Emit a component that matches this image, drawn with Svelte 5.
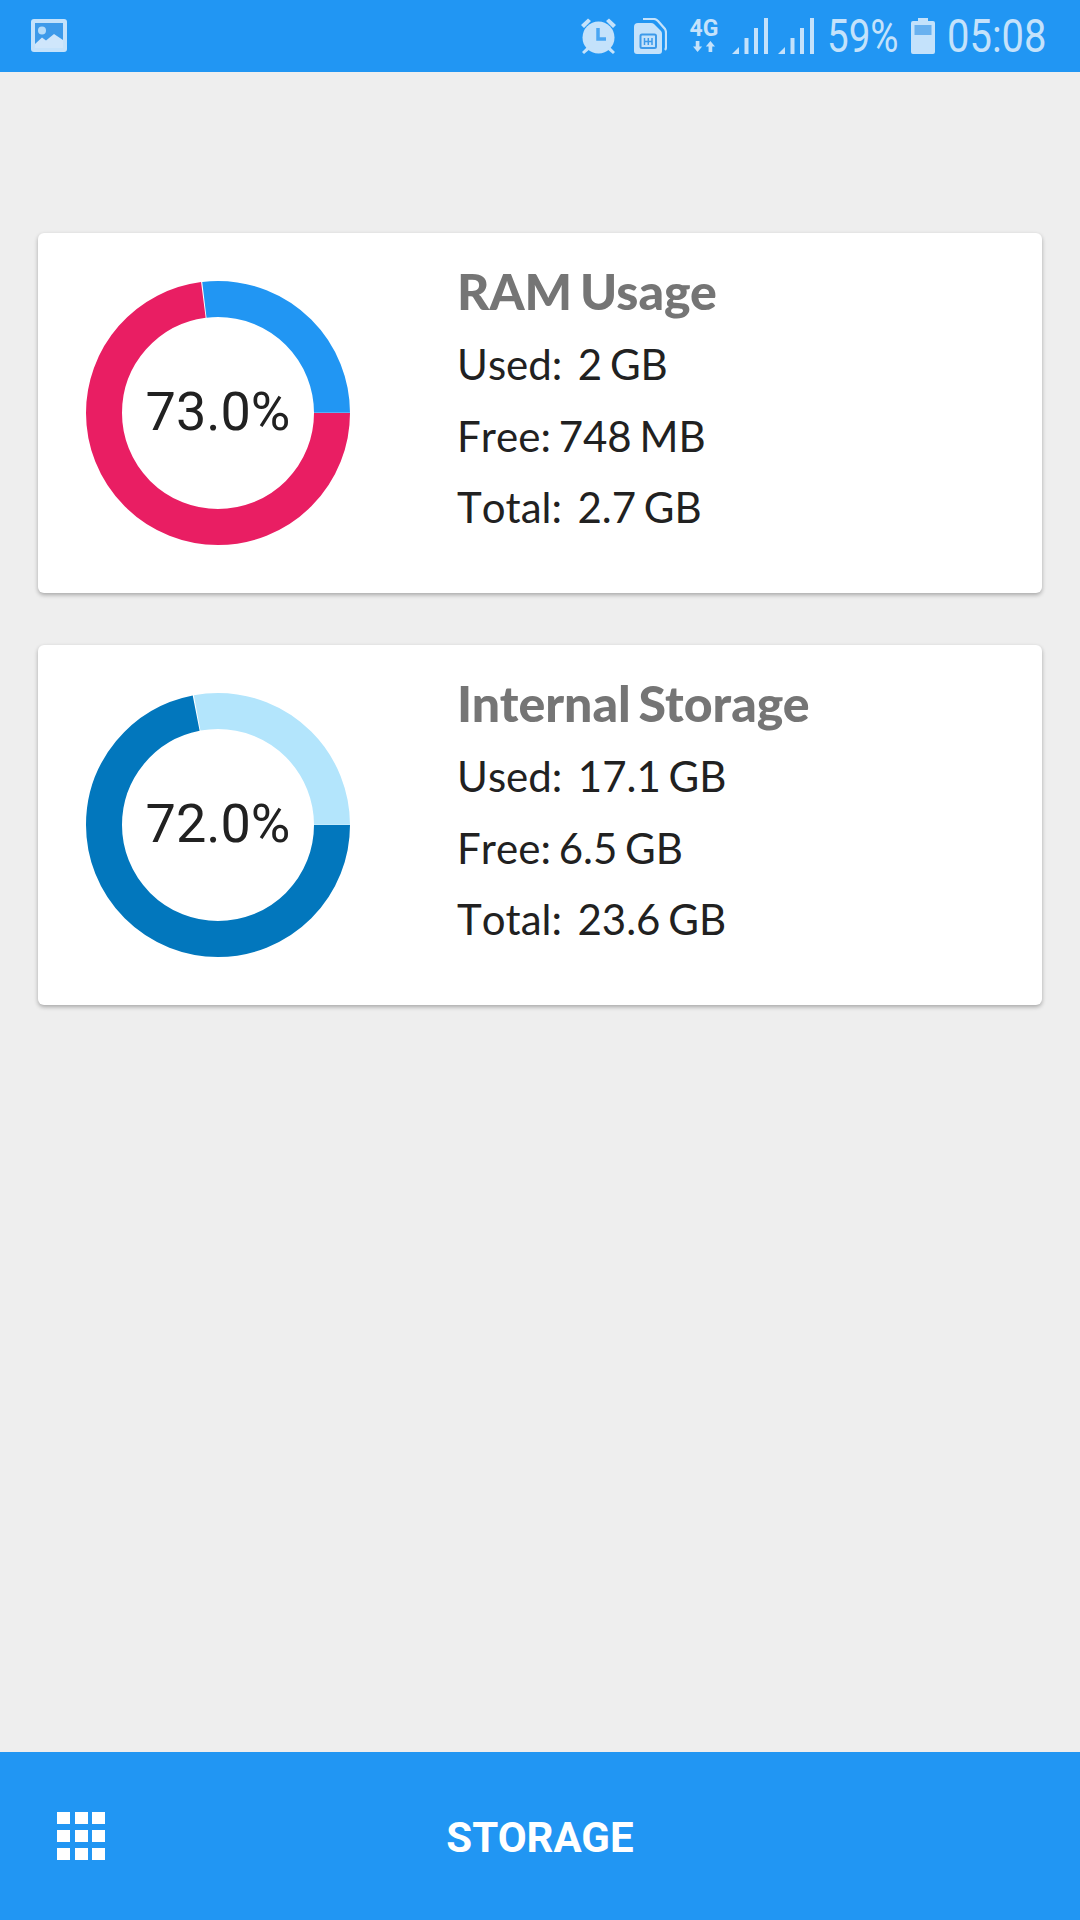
<script>
  const R = 114
  const C = 2 * Math.PI * R

  const cards = [
    {
      title: 'RAM Usage',
      pct: 73,
      used: '#e91e63',
      free: '#2196f3',
      rows: ['Used:  2 GB', 'Free: 748 MB', 'Total:  2.7 GB']
    },
    {
      title: 'Internal Storage',
      pct: 72,
      used: '#0277bd',
      free: '#b3e5fc',
      rows: ['Used:  17.1 GB', 'Free: 6.5 GB', 'Total:  23.6 GB']
    }
  ]

  // arcs start at 3 o'clock and run clockwise, 1px gap between the two
  const dash = (from, to) => {
    const a = (from / 100) * C
    const b = (to / 100) * C
    return { array: `${b - a - 1} ${C - (b - a - 1)}`, offset: -a }
  }
</script>

<div class="screen">
  <header class="status">
    <svg class="pic" viewBox="0 0 36 33" width="36" height="33">
      <rect width="36" height="33" rx="3" fill="#c4e2fb" />
      <rect x="4" y="4" width="28" height="25" fill="#3d9aea" />
      <circle cx="11" cy="11.5" r="4" fill="#b5dcfa" />
      <path d="M4 25 L11 18.5 L15 21.5 L23 15 L32 21 V29 H4 Z" fill="#cfe6fb" />
    </svg>

    <div class="tray">
      <svg class="i-alarm" viewBox="0 0 35 36" width="35" height="36">
        <circle cx="17.5" cy="19.5" r="16" fill="#c4e2fb" />
        <path d="M0 7 L7 0.5 L10 3 L3 10 Z M35 7 L28 0.500 L25 3 L32 10 Z" fill="#c4e2fb" />
        <path d="M3 36 L1 34 L6 29 L9 31 Z M32 36 L34 34 L29 29 L26 31 Z" fill="#c4e2fb" />
        <path d="M17 10 V21 H25" fill="none" stroke="#4aa6f3" stroke-width="3.500" />
      </svg>
      <svg class="i-sim" viewBox="0 0 33 36" width="33" height="36">
        <path d="M9 1 H20 Q22 1 24 3 L31 11 Q32 12.500 32 15 V29 Q32 31 31 32" fill="none" stroke="#c4e2fb" stroke-width="2.200" />
        <path d="M4 5 H17 Q19 5 20 6 L27 13 Q28 14 28 16 V33 Q28 36 25 36 H3 Q0 36 0 33 V9 Q0 5 4 5 Z" fill="#c4e2fb" />
        <rect x="6.500" y="16.500" width="15.500" height="13.500" rx="1.500" fill="none" stroke="#3d9aea" stroke-width="2" />
        <path d="M10.500 20 V27 M14.300 20 V27 M18 20 V27 M10 23.500 H18" stroke="#3d9aea" stroke-width="1.500" fill="none" />
      </svg>
      <div class="net">
        <span class="g4">4G</span>
        <svg viewBox="0 0 24 12" width="22" height="11">
          <path d="M3 0 H7 V6 H10 L5 12 L0 6 H3 Z M17 12 H21 V6 H24 L19 0 L14 6 H17 Z" fill="#c4e2fb" />
        </svg>
      </div>
      {#each ['i-sig1', 'i-sig2'] as cls}
        <svg class={cls} viewBox="0 0 36 36" width="36" height="36">
          <path d="M0 36 L7 29 V36 Z" fill="#c4e2fb" />
          <rect x="12.500" y="20" width="4" height="16" fill="#c4e2fb" />
          <rect x="22" y="10" width="4" height="26" fill="#c4e2fb" />
          <rect x="32" y="0" width="4" height="36" fill="#c4e2fb" />
        </svg>
      {/each}
      <span class="txt pct">59%</span>
      <svg class="i-batt" viewBox="0 0 24 36" width="24" height="36">
        <path d="M7 0 H17 V3 H22 Q24 3 24 5 V34 Q24 36 22 36 H2 Q0 36 0 34 V5 Q0 3 2 3 H7 Z" fill="#c4e2fb" />
        <rect x="3.500" y="7" width="17" height="10" fill="#69b1ef" />
      </svg>
      <span class="txt time">05:08</span>
    </div>
  </header>

  <main class="content">
    {#each cards as card}
      <section class="card">
        <div class="donut">
          <svg viewBox="0 0 264 264" width="264" height="264">
            <g fill="none" stroke-width="36">
              <circle
                cx="132" cy="132" r={R}
                stroke={card.used}
                stroke-dasharray={dash(0, card.pct).array}
                stroke-dashoffset={dash(0, card.pct).offset}
              />
              <circle
                cx="132" cy="132" r={R}
                stroke={card.free}
                stroke-dasharray={dash(card.pct, 100).array}
                stroke-dashoffset={dash(card.pct, 100).offset}
              />
            </g>
          </svg>
          <span class="value">{card.pct.toFixed(1)}%</span>
        </div>
        <div class="info">
          <h2>{card.title}</h2>
          {#each card.rows as row}
            <p>{row}</p>
          {/each}
        </div>
      </section>
    {/each}
  </main>

  <footer class="nav">
    <div class="grid-icon">
      {#each Array(9) as _}
        <i></i>
      {/each}
    </div>
    <span class="nav-title">STORAGE</span>
  </footer>
</div>

<style>
  :global(body) {
    margin: 0;
    background: #eeeeee;
  }

  .screen {
    width: 1080px;
    height: 1920px;
    display: flex;
    flex-direction: column;
    background: #eeeeee;
    overflow: hidden;
  }

  .status {
    height: 72px;
    flex: none;
    background: #2196f3;
    display: flex;
    align-items: center;
    padding: 0 35px 0 31px;
    box-sizing: border-box;
  }

  .pic {
    margin-top: -1px;
  }

  .tray {
    margin-left: auto;
    display: flex;
    align-items: center;
  }

  .tray svg {
    display: block;
    flex: none;
  }

  .i-sim {
    margin-left: 18px;
  }

  .net {
    margin-left: 23px;
    width: 28px;
    display: flex;
    flex-direction: column;
    align-items: center;
    gap: 3px;
    margin-top: -1px;
  }

  .g4 {
    font: 700 23px/18px Roboto, sans-serif;
    color: #c4e2fb;
  }

  .i-sig1 {
    margin-left: 14px;
  }

  .i-sig2 {
    margin-left: 10px;
  }

  .txt {
    font: 400 47px/36px Roboto, sans-serif;
    color: #c4e2fb;
    transform-origin: left center;
    white-space: nowrap;
  }

  .pct {
    margin-left: 13px;
    width: 71px;
    transform: scaleX(0.82);
  }

  .i-batt {
    margin-left: 13px;
  }

  .time {
    margin-left: 12px;
    width: 98px;
    transform: scaleX(0.85);
  }

  .content {
    flex: 1;
    padding: 161px 38px 0;
    display: flex;
    flex-direction: column;
    gap: 52px;
  }

  .card {
    height: 360px;
    box-sizing: border-box;
    background: #fff;
    border-radius: 6px;
    box-shadow: 0 2px 4px rgba(0, 0, 0, 0.3);
    display: flex;
    padding-left: 48px;
  }

  .donut {
    display: grid;
    place-items: center;
    width: 264px;
    height: 264px;
    margin-top: 48px;
    flex: none;
  }

  .donut > * {
    grid-area: 1 / 1;
  }

  .donut svg {
    display: block;
  }

  .value {
    font: 400 54px/1 Roboto, sans-serif;
    color: #212121;
    margin-top: -2px;
  }

  .info {
    margin-left: 107px;
    padding-top: 27px;
  }

  h2 {
    margin: 0 0 7px;
    font: 900 50px/62px Lato, sans-serif;
    color: #757575;
    word-spacing: -4px;
  }

  p {
    margin: 0;
    font: 400 42px/71.500px Lato, sans-serif;
    color: #212121;
    white-space: pre;
    word-spacing: -3px;
    font-kerning: none;
  }

  .nav {
    height: 168px;
    flex: none;
    background: #2196f3;
    display: grid;
    grid-template-columns: 1fr auto 1fr;
    align-items: center;
    padding-left: 57px;
    padding-right: 57px;
  }

  .grid-icon {
    width: 48px;
    display: grid;
    grid-template-columns: repeat(3, 13px);
    grid-auto-rows: 12px;
    column-gap: 4.500px;
    row-gap: 6px;
  }

  .grid-icon i {
    background: #fff;
  }

  .nav-title {
    font: 700 42px/1 Roboto, sans-serif;
    color: #fff;
    margin-top: 3px;
  }
</style>
